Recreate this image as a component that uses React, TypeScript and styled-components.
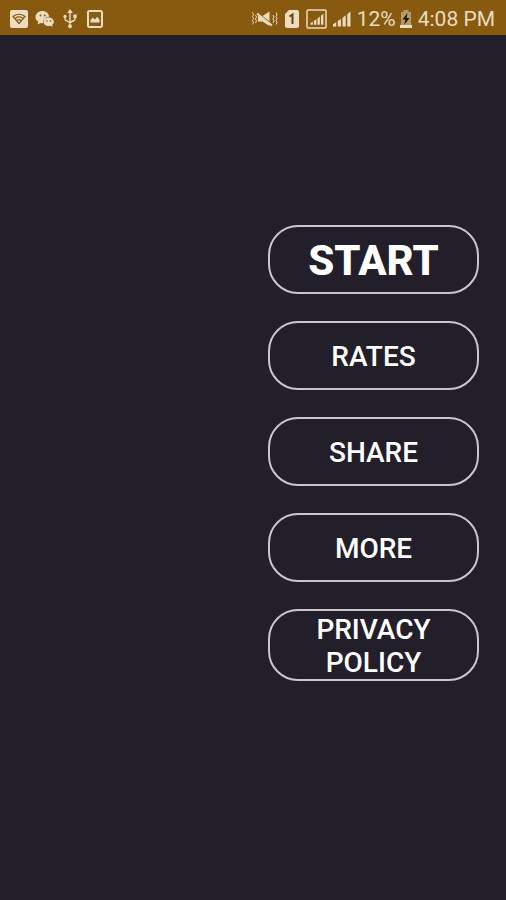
import React from "react";
import styled, { createGlobalStyle } from "styled-components";

const GlobalStyle = createGlobalStyle`
  *, *::before, *::after { box-sizing: border-box; }
  body {
    margin: 0;
    background: #231f2a;
    font-family: Roboto, "Liberation Sans", sans-serif;
  }
`;

const Screen = styled.div`
  min-height: 100vh;
  display: flex;
  flex-direction: column;
  background: #231f2a;
`;

const StatusBar = styled.header`
  display: flex;
  align-items: center;
  justify-content: space-between;
  height: 35px;
  padding: 2px 11px 0 10px;
  background: #875a10;
  color: #ecdcc0;
`;

const IconGroup = styled.div`
  display: flex;
  align-items: center;
  gap: 7px;
`;

const SystemGroup = styled(IconGroup)`
  gap: 6px;
`;

const Glyph = styled.svg`
  display: block;
  flex: none;
  fill: currentColor;
`;

const BatteryLevel = styled.div`
  display: flex;
  align-items: center;
  gap: 4px;
`;

const StatusText = styled.span`
  font-size: 21px;
  line-height: 26px;
  white-space: nowrap;
`;

const Menu = styled.nav`
  display: flex;
  flex-direction: column;
  align-items: stretch;
  align-self: flex-end;
  gap: 27px;
  width: 41%;
  min-width: 211px;
  margin: 190px 27px 27px 0;
`;

const MenuButton = styled.button<{ $primary?: boolean }>`
  min-height: 69px;
  padding: 2px 32px 0;
  border: 2px solid #c9c7cb;
  border-radius: 30px;
  background: transparent;
  color: #fff;
  font-family: inherit;
  font-size: ${(p) => (p.$primary ? "42px" : "28px")};
  font-weight: ${(p) => (p.$primary ? 800 : 500)};
  line-height: ${(p) => (p.$primary ? "48px" : "33px")};
  text-transform: uppercase;
  cursor: pointer;
`;

const WifiIcon = () => (
  <Glyph width="18" height="18" viewBox="0 0 18 18" aria-hidden="true">
    <rect width="18" height="18" rx="2" />
    <g fill="none" stroke="#875a10">
      <path d="M3 6.5Q9 2 15 6.5L9 13.5Z" strokeWidth="1.2" />
      <path d="M5.3 8.2Q9 5.6 12.7 8.2M7 10.2Q9 9 11 10.2" strokeWidth="1.2" />
    </g>
  </Glyph>
);

const ChatIcon = () => (
  <Glyph width="20" height="18" viewBox="0 0 20 18" aria-hidden="true">
    <path d="M7.5 1C3.500 1 .5 3.700 .5 7c0 2 1 3.600 2.700 4.800L2.700 14.500l2.800-1.600c.8.2 1.700.3 2.600.2A5.500 5.500 0 0 1 14.200 6.800C13.800 3.400 11.200 1 7.500 1Z" />
    <path d="M13.500 7.500c-2.900 0-5 1.900-5 4.300s2.100 4.300 5 4.300c.7 0 1.400-.1 2-.3l2.200 1.200-.6-2c1.100-.8 1.700-1.900 1.700-3.200 0-2.400-2.300-4.300-5.300-4.300Z" />
    <g fill="#875a10">
      <circle cx="5.500" cy="5.500" r="0.900" />
      <circle cx="9.700" cy="5.500" r="0.900" />
      <circle cx="12" cy="11" r="0.800" />
      <circle cx="15.500" cy="11" r="0.800" />
    </g>
  </Glyph>
);

const UsbIcon = () => (
  <Glyph width="18" height="20" viewBox="1 0 18 20" aria-hidden="true">
    <path d="M9 0 6.200 4h5.600Z" />
    <circle cx="9" cy="17.200" r="2" />
    <circle cx="4" cy="7.300" r="1.600" />
    <path d="M12.300 5.500h3.400v3.400h-3.400Z" />
    <path d="M9 3v14M4 7v3q0 1 1 1.500l4 2.200M14 8v2q0 1-1 1.500l-4 2" fill="none" stroke="currentColor" strokeWidth="1.400" />
  </Glyph>
);

const PictureIcon = () => (
  <Glyph width="16" height="18" viewBox="0 0 16 18" aria-hidden="true">
    <rect x="1" y="1" width="14" height="16" rx="1.500" fill="none" stroke="currentColor" strokeWidth="2" />
    <path d="M3.500 12.500V10l2.300-2.500 2 2 2.500-2.800 2.200 3v2.800Z" />
  </Glyph>
);

const MuteIcon = () => (
  <Glyph width="27" height="18" viewBox="0 0 27 18" aria-hidden="true">
    <path d="M7 6h4.500L18.500 1.500v14.500l-7-4.500H7Z" />
    <path d="M5.500 2.500 21.500 15" stroke="#875a10" strokeWidth="2.200" />
    <path d="M6 3.500 21 15.500" stroke="currentColor" strokeWidth="1.800" />
    <path d="M1.500 2.500l1 2-1 2 1 2-1 2 1 2-1 2M4.500 5l1 2-1 2 1 2-1 2M22 5l1 2-1 2 1 2-1 2M25 2.500l1 2-1 2 1 2-1 2 1 2-1 2" fill="none" stroke="currentColor" strokeWidth="1" />
  </Glyph>
);

const SimIcon = () => (
  <Glyph width="16" height="18" viewBox="3 0 16 18" aria-hidden="true">
    <path d="M8 0h8q2 0 2 2v14q0 2-2 2H6q-2 0-2-2V4Z" />
    <path d="M8.500 6.500 11.500 4.500V14" fill="none" stroke="#694200" strokeWidth="2" />
  </Glyph>
);

const SignalBars = () => (
  <path d="M0 15v-2l3-2v4ZM4.500 15v-5l3-2v7ZM9 15V7l3-2.500V15ZM13.500 15V3.500L16.500 1v14Z" />
);

const BoxedSignalIcon = () => (
  <Glyph width="21" height="20" viewBox="0 0 21 20" aria-hidden="true">
    <rect x="1" y="1" width="19" height="18" rx="1" fill="none" stroke="currentColor" strokeWidth="1.500" />
    <g transform="translate(4.500 4) scale(.78)">
      <SignalBars />
    </g>
  </Glyph>
);

const SignalIcon = () => (
  <Glyph width="18" height="18" viewBox="0 0 17 16" aria-hidden="true">
    <SignalBars />
  </Glyph>
);

const BatteryIcon = () => (
  <Glyph width="12" height="18" viewBox="0 0 12 18" aria-hidden="true">
    <path d="M3.500 0h5v2H11v13H1V2h2.500Z" opacity="0.500" />
    <path d="M0 15h12v3H0Z" />
    <path d="M7.500 3 2.500 9.500h3L4 15l5.500-7h-3Z" fill="#17120b" />
  </Glyph>
);

const items = [
  { label: "Start", primary: true },
  { label: "Rates" },
  { label: "Share" },
  { label: "More" },
  { label: "Privacy Policy" },
];

export default function App() {
  return (
    <Screen>
      <GlobalStyle />
      <StatusBar>
        <IconGroup>
          <WifiIcon />
          <ChatIcon />
          <UsbIcon />
          <PictureIcon />
        </IconGroup>
        <SystemGroup>
          <MuteIcon />
          <SimIcon />
          <BoxedSignalIcon />
          <SignalIcon />
          <BatteryLevel>
            <StatusText>12%</StatusText>
            <BatteryIcon />
          </BatteryLevel>
          <StatusText>4:08 PM</StatusText>
        </SystemGroup>
      </StatusBar>
      <Menu aria-label="Main menu">
        {items.map((item) => (
          <MenuButton key={item.label} type="button" $primary={item.primary}>
            {item.label}
          </MenuButton>
        ))}
      </Menu>
    </Screen>
  );
}
